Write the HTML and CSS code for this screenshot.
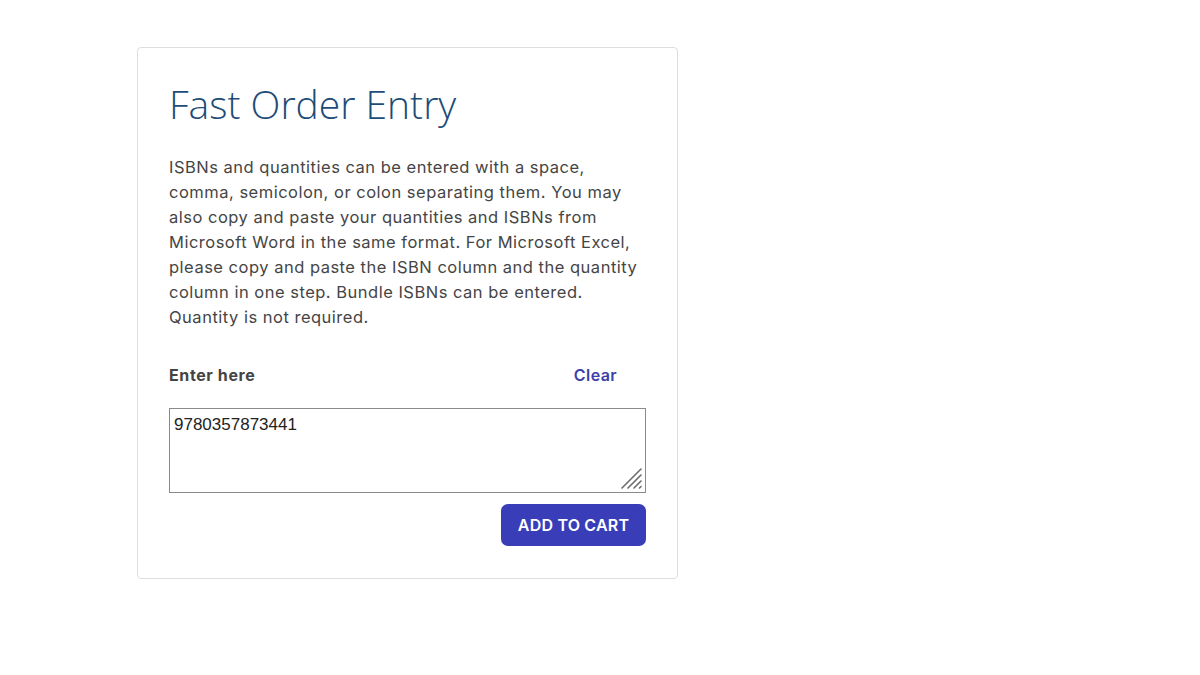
FILE: index.html
```html
<!DOCTYPE html>
<html lang="en">
<head>
<meta charset="utf-8">
<title>Fast Order Entry</title>
<link rel="stylesheet" href="styles.css">
</head>
<body>
<main class="page">
  <section class="card">
    <h1 class="title">Fast Order Entry</h1>
    <p class="intro">ISBNs and quantities can be entered with a space, comma, semicolon, or colon separating them. You may also copy and paste your quantities and ISBNs from Microsoft Word in the same format. For Microsoft Excel, please copy and paste the ISBN column and the quantity column in one step. Bundle ISBNs can be entered. Quantity is not required.</p>
    <div class="label-row">
      <label class="label" for="entry">Enter here</label>
      <a class="clear" href="#">Clear</a>
    </div>
    <div class="entry-wrap">
      <textarea class="entry" id="entry">9780357873441</textarea>
      <svg class="grip" width="24" height="24" viewBox="0 0 24 24" aria-hidden="true">
        <g stroke="#6b6b6b" stroke-width="1.6" stroke-linecap="round">
          <line x1="22" y1="3" x2="3" y2="22"/>
          <line x1="22" y1="9" x2="9" y2="22"/>
          <line x1="22" y1="15" x2="15" y2="22"/>
          <line x1="22" y1="20.5" x2="20.5" y2="22"/>
        </g>
      </svg>
    </div>
    <div class="actions">
      <button class="btn" type="button">ADD TO CART</button>
    </div>
  </section>
</main>
</body>
</html>
```
FILE: styles.css
```css
* { box-sizing: border-box; }
html, body { margin: 0; padding: 0; background: #fff; }
body { font-family: Inter, "Open Sans", "Liberation Sans", Arial, sans-serif; color: #444; }
.page { padding: 47px 0 0 137px; }
.card {
  width: 541px;
  height: 532px;
  border: 1px solid #dedede;
  border-radius: 4px;
  padding: 32px 31px 32px 31px;
  display: flex;
  flex-direction: column;
}
.title {
  margin: 0;
  font-family: "Open Sans", "Liberation Sans", Arial, sans-serif;
  font-weight: 300;
  font-size: 39px;
  line-height: 48px;
  color: #1d4c78;
}
.intro {
  margin: 27px 0 0 0;
  font-size: 16.5px;
  letter-spacing: 0.5px;
  line-height: 25px;
  color: #454545;
  width: 473px;
}
.label-row {
  margin-top: 32px;
  display: flex;
  justify-content: space-between;
  align-items: center;
  padding-right: 29px;
  height: 26px;
}
.label { font-weight: 700; font-size: 16px; letter-spacing: 0.6px; color: #444; }
.clear { font-weight: 600; font-size: 16px; letter-spacing: 0.4px; color: #3b40a8; text-decoration: none; }
.entry-wrap { position: relative; margin-top: 20px; width: 477px; height: 85px; }
.entry {
  display: block;
  width: 477px;
  height: 85px;
  border: 1px solid #8a8a8a;
  border-radius: 0;
  padding: 6px 4px;
  font-family: "Liberation Sans", Arial, sans-serif;
  font-size: 17px;
  color: #222;
  resize: none;
}
.grip { position: absolute; right: 3px; bottom: 3px; pointer-events: none; }
.actions { display: flex; justify-content: flex-end; margin-top: 11px; width: 477px; }
.btn {
  width: 145px;
  height: 42px;
  border: none;
  border-radius: 7px;
  background: #3a3db8;
  color: #fff;
  font-family: Inter, "Open Sans", "Liberation Sans", Arial, sans-serif;
  font-weight: 600;
  font-size: 16px;
  letter-spacing: 0.2px;
}
```
